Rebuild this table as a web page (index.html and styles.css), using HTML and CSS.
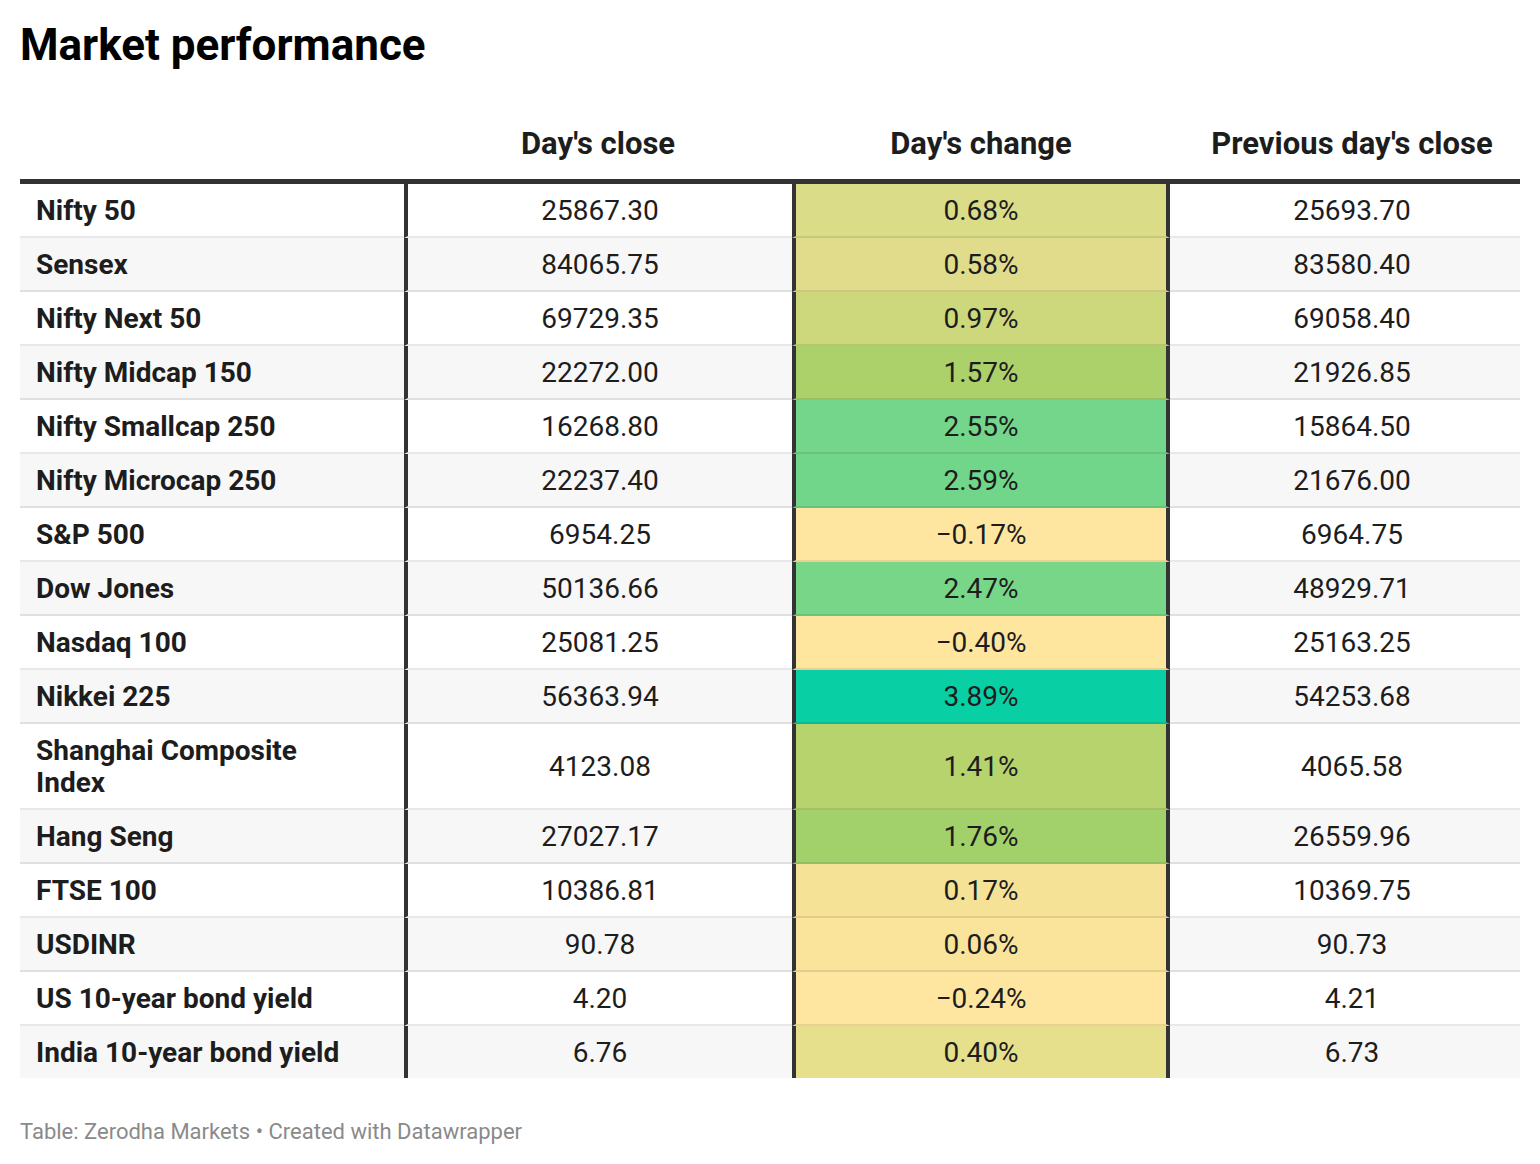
FILE: index.html
```html
<!DOCTYPE html>
<html lang="en">
<head>
<meta charset="utf-8">
<title>Market performance</title>
<link rel="stylesheet" href="styles.css">
</head>
<body>
<div class="chart">
  <h1 class="title">Market performance</h1>
  <table class="tbl">
    <colgroup>
      <col class="c1"><col class="c2"><col class="c3"><col class="c4">
    </colgroup>
    <thead>
      <tr>
        <th class="name"></th>
        <th class="num">Day's close</th>
        <th class="num chg">Day's change</th>
        <th class="num last">Previous day's close</th>
      </tr>
    </thead>
    <tbody>
      <tr><td class="name">Nifty 50</td><td class="num">25867.30</td><td class="num chg" style="background:#dbdc87">0.68%</td><td class="num last">25693.70</td></tr>
      <tr><td class="name">Sensex</td><td class="num">84065.75</td><td class="num chg" style="background:#e0dc8c">0.58%</td><td class="num last">83580.40</td></tr>
      <tr><td class="name">Nifty Next 50</td><td class="num">69729.35</td><td class="num chg" style="background:#ccd87b">0.97%</td><td class="num last">69058.40</td></tr>
      <tr><td class="name">Nifty Midcap 150</td><td class="num">22272.00</td><td class="num chg" style="background:#acd16a">1.57%</td><td class="num last">21926.85</td></tr>
      <tr><td class="name">Nifty Smallcap 250</td><td class="num">16268.80</td><td class="num chg" style="background:#74d68a">2.55%</td><td class="num last">15864.50</td></tr>
      <tr><td class="name">Nifty Microcap 250</td><td class="num">22237.40</td><td class="num chg" style="background:#72d68a">2.59%</td><td class="num last">21676.00</td></tr>
      <tr><td class="name">S&amp;P 500</td><td class="num">6954.25</td><td class="num chg" style="background:#ffe6a0">−0.17%</td><td class="num last">6964.75</td></tr>
      <tr><td class="name">Dow Jones</td><td class="num">50136.66</td><td class="num chg" style="background:#78d688">2.47%</td><td class="num last">48929.71</td></tr>
      <tr><td class="name">Nasdaq 100</td><td class="num">25081.25</td><td class="num chg" style="background:#ffe69f">−0.40%</td><td class="num last">25163.25</td></tr>
      <tr><td class="name">Nikkei 225</td><td class="num">56363.94</td><td class="num chg" style="background:#08cfa4">3.89%</td><td class="num last">54253.68</td></tr>
      <tr><td class="name">Shanghai Composite Index</td><td class="num">4123.08</td><td class="num chg" style="background:#b6d36e">1.41%</td><td class="num last">4065.58</td></tr>
      <tr><td class="name">Hang Seng</td><td class="num">27027.17</td><td class="num chg" style="background:#a2d06a">1.76%</td><td class="num last">26559.96</td></tr>
      <tr><td class="name">FTSE 100</td><td class="num">10386.81</td><td class="num chg" style="background:#f6e297">0.17%</td><td class="num last">10369.75</td></tr>
      <tr><td class="name">USDINR</td><td class="num">90.78</td><td class="num chg" style="background:#fae49c">0.06%</td><td class="num last">90.73</td></tr>
      <tr><td class="name">US 10-year bond yield</td><td class="num">4.20</td><td class="num chg" style="background:#ffe6a0">−0.24%</td><td class="num last">4.21</td></tr>
      <tr><td class="name">India 10-year bond yield</td><td class="num">6.76</td><td class="num chg" style="background:#e6df8c">0.40%</td><td class="num last">6.73</td></tr>
    </tbody>
  </table>
  <p class="footer">Table: Zerodha Markets • Created with Datawrapper</p>
</div>
</body>
</html>
```
FILE: styles.css
```css
html, body {
  margin: 0;
  padding: 0;
  background: #ffffff;
}

body {
  font-family: Roboto, "Liberation Sans", sans-serif;
  color: #1d1d1d;
}

.chart {
  padding: 19px 20px 0 20px;
}

.title {
  margin: 0 0 54px 0;
  font-size: 44px;
  line-height: 52px;
  font-weight: 700;
  color: #000000;
}

.tbl {
  width: 1500px;
  table-layout: fixed;
  border-collapse: separate;
  border-spacing: 0;
}

.c1 { width: 384px; }
.c2 { width: 388px; }
.c3 { width: 378px; }
.c4 { width: 350px; }

.tbl th {
  font-size: 31px;
  line-height: 36px;
  font-weight: 700;
  color: #1d1d1d;
  padding: 1px 0 17px 0;
  border-bottom: 5px solid #333333;
  vertical-align: bottom;
  text-align: center;
}

.tbl th.last {
  padding-left: 14px;
}

.tbl td {
  font-size: 28px;
  line-height: 32px;
  padding: 11px 0 9px 0;
  border-bottom: 2px solid rgba(0, 0, 0, 0.09);
  vertical-align: middle;
}

.tbl tbody tr:nth-child(even) {
  background: #f7f7f7;
}

.tbl tbody tr:last-child td {
  border-bottom: none;
}

.tbl td.name {
  font-weight: 700;
  text-align: left;
  padding-left: 16px;
  padding-right: 40px;
}

.tbl td.num {
  text-align: center;
  border-left: 4px solid #333333;
}

.tbl td.chg {
  border-right: 4px solid #333333;
}

.tbl td.last {
  border-left: none;
  padding-left: 14px;
}

.footer {
  margin: 41px 0 0 0;
  font-size: 22px;
  line-height: 26px;
  color: #8a8a8a;
}
```
